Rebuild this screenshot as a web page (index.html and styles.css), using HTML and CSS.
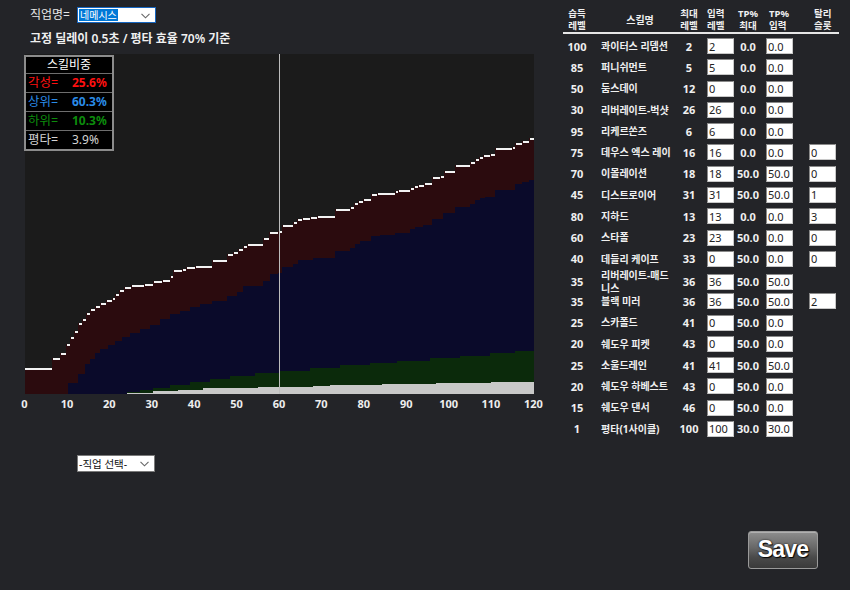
FILE: index.html
```html
<!DOCTYPE html>
<html lang="ko">
<head>
<meta charset="utf-8">
<title>스킬비중</title>
<link rel="stylesheet" href="styles.css">
</head>
<body>
<div class="app">
  <section class="left">
    <div class="jobrow">
      <span class="lbl">직업명=</span>
      <div class="fsel focus">
        <span class="hl">네메시스</span>
        <svg class="chev" width="9" height="6" viewBox="0 0 9 6"><path d="M0.5 0.8 L4.5 4.8 L8.5 0.8" fill="none" stroke="#666" stroke-width="1.1"/></svg>
      </div>
    </div>
    <div class="subtitle">고정 딜레이 0.5초 / 평타 효율 70% 기준</div>
    <div class="chart">
      <svg class="plot" width="509" height="340" viewBox="25 53 509 340" preserveAspectRatio="none">
        <path fill="#2b0b0e" d="M25 393V367H52V357H60V352H66V343H70V336H74V330H78V322H82V318H86V312H90V308H95V305H100V302H106V299H112V297H115V293H119V289H124V286H131V284H144V283H153V280H162V279H170V275H173V269H182V268H186V266H195V265H212V259H227V253H233V251H238V248H243V245H247V243H263V237H269V231H278V230H282V224H293V221H297V218H302V217H310V216H317V215H335V208H350V206H354V202H358V200H363V198H371V193H377V192H395V190H398V189H410V187H414V185H418V184H424V182H432V176H440V175H444V170H455V164H470V161H475V158H479V156H483V154H490V153H495V147H512V146H515V142H522V140H529V137H534V393Z"/>
        <path fill="#0a0a2a" d="M68 393V382H78V373H85V363H90V358H95V352H100V348H108V344H115V340H122V336H130V332H140V328H150V324H160V318H170V313H180V310H190V306H200V303H212V300H227V295H237V291H243V285H263V280H270V273H278V272H282V266H293V263H298V259H313V257H335V250H350V247H355V243H360V240H371V235H380V234H395V232H410V228H415V226H423V224H432V218H443V212H455V206H470V203H475V199H480V197H485V196H495V189H515V183H522V181H529V179H534V393Z"/>
        <path fill="#0b2a0b" d="M127 393V391H140V389H153V387H170V384H190V381H210V378H230V375H255V372H280V370H310V367H340V364H370V362H397V360H430V357H460V355H490V352H515V350H534V393Z"/>
        <path fill="#c8c8c8" d="M127 393V392H153V390H178V389H203V387H258V386H313V385H330V384H382V383H436V382H491V381H534V393Z"/>
        <path fill="none" stroke="#f2f2f2" stroke-width="2" d="M25 368H52M53 358H60M61 353H66M67 344H70M71 337H74M75 331H78M79 323H82M83 319H86M87 313H90M91 309H95M96 306H100M101 303H106M107 300H112M113 298H115M116 294H119M120 290H124M125 287H131M132 285H144M145 284H153M154 281H162M163 280H170M171 276H173M174 270H182M183 269H186M187 267H195M196 266H212M213 260H227M228 254H233M234 252H238M239 249H243M244 246H247M248 244H263M264 238H269M270 232H278M279 231H282M283 225H293M294 222H297M298 219H302M303 218H310M311 217H317M318 216H335M336 209H350M351 207H354M355 203H358M359 201H363M364 199H371M372 194H377M378 193H395M396 191H398M399 190H410M411 188H414M415 186H418M419 185H424M425 183H432M433 177H440M441 176H444M445 171H455M456 165H470M471 162H475M476 159H479M480 157H483M484 155H490M491 154H495M496 148H512M513 147H515M516 143H522M523 141H529M530 138H534"/>
        <path stroke="#bdbdbd" stroke-width="1" d="M279.5 53V393"/>
      </svg>
      <div class="legend">
        <div class="lg-title">스킬비중</div>
        <div class="lg-row c-awk"><span class="k">각성=</span><span class="v">25.6%</span></div>
        <div class="lg-row c-up"><span class="k">상위=</span><span class="v">60.3%</span></div>
        <div class="lg-row c-low"><span class="k">하위=</span><span class="v">10.3%</span></div>
        <div class="lg-row c-basic"><span class="k">평타=</span><span class="v">3.9%</span></div>
      </div>
    </div>
    <div class="axis">
      <span>0</span><span>10</span><span>20</span><span>30</span><span>40</span><span>50</span><span>60</span><span>70</span><span>80</span><span>90</span><span>100</span><span>110</span><span>120</span>
    </div>
    <div class="fsel sel2">
      <span class="opt">-직업 선택-</span>
      <svg class="chev" width="9" height="6" viewBox="0 0 9 6"><path d="M0.5 0.8 L4.5 4.8 L8.5 0.8" fill="none" stroke="#666" stroke-width="1.1"/></svg>
    </div>
  </section>

  <section class="right">
    <div class="row thead">
      <span class="c1">습득<br>레벨</span>
      <span class="c2 hc">스킬명</span>
      <span class="c3">최대<br>레벨</span>
      <span class="c4h">입력<br>레벨</span>
      <span class="c5">TP%<br>최대</span>
      <span class="c6h">TP%<br>입력</span>
      <span class="c7h">탈리<br>슬롯</span>
    </div>
    <div class="rows">
      <div class="row"><span class="c1">100</span><span class="c2">콰이터스 리뎀션</span><span class="c3">2</span><span class="c4"><input class="inp" value="2"></span><span class="c5">0.0</span><span class="c6"><input class="inp" value="0.0"></span><span class="c7"></span></div>
      <div class="row"><span class="c1">85</span><span class="c2">퍼니쉬먼트</span><span class="c3">5</span><span class="c4"><input class="inp" value="5"></span><span class="c5">0.0</span><span class="c6"><input class="inp" value="0.0"></span><span class="c7"></span></div>
      <div class="row"><span class="c1">50</span><span class="c2">둠스데이</span><span class="c3">12</span><span class="c4"><input class="inp" value="0"></span><span class="c5">0.0</span><span class="c6"><input class="inp" value="0.0"></span><span class="c7"></span></div>
      <div class="row"><span class="c1">30</span><span class="c2">리버레이트-벅샷</span><span class="c3">26</span><span class="c4"><input class="inp" value="26"></span><span class="c5">0.0</span><span class="c6"><input class="inp" value="0.0"></span><span class="c7"></span></div>
      <div class="row"><span class="c1">95</span><span class="c2">리케르쏜즈</span><span class="c3">6</span><span class="c4"><input class="inp" value="6"></span><span class="c5">0.0</span><span class="c6"><input class="inp" value="0.0"></span><span class="c7"></span></div>
      <div class="row"><span class="c1">75</span><span class="c2">데우스 엑스 레이</span><span class="c3">16</span><span class="c4"><input class="inp" value="16"></span><span class="c5">0.0</span><span class="c6"><input class="inp" value="0.0"></span><span class="c7"><input class="inp" value="0"></span></div>
      <div class="row"><span class="c1">70</span><span class="c2">이몰레이션</span><span class="c3">18</span><span class="c4"><input class="inp" value="18"></span><span class="c5">50.0</span><span class="c6"><input class="inp" value="50.0"></span><span class="c7"><input class="inp" value="0"></span></div>
      <div class="row"><span class="c1">45</span><span class="c2">디스트로이어</span><span class="c3">31</span><span class="c4"><input class="inp" value="31"></span><span class="c5">50.0</span><span class="c6"><input class="inp" value="50.0"></span><span class="c7"><input class="inp" value="1"></span></div>
      <div class="row"><span class="c1">80</span><span class="c2">지하드</span><span class="c3">13</span><span class="c4"><input class="inp" value="13"></span><span class="c5">0.0</span><span class="c6"><input class="inp" value="0.0"></span><span class="c7"><input class="inp" value="3"></span></div>
      <div class="row"><span class="c1">60</span><span class="c2">스타폴</span><span class="c3">23</span><span class="c4"><input class="inp" value="23"></span><span class="c5">50.0</span><span class="c6"><input class="inp" value="0.0"></span><span class="c7"><input class="inp" value="0"></span></div>
      <div class="row"><span class="c1">40</span><span class="c2">데들리 케이프</span><span class="c3">33</span><span class="c4"><input class="inp" value="0"></span><span class="c5">50.0</span><span class="c6"><input class="inp" value="0.0"></span><span class="c7"><input class="inp" value="0"></span></div>
      <div class="row"><span class="c1">35</span><span class="c2">리버레이트-매드니스</span><span class="c3">36</span><span class="c4"><input class="inp" value="36"></span><span class="c5">50.0</span><span class="c6"><input class="inp" value="50.0"></span><span class="c7"></span></div>
      <div class="row"><span class="c1">35</span><span class="c2">블랙 미러</span><span class="c3">36</span><span class="c4"><input class="inp" value="36"></span><span class="c5">50.0</span><span class="c6"><input class="inp" value="50.0"></span><span class="c7"><input class="inp" value="2"></span></div>
      <div class="row"><span class="c1">25</span><span class="c2">스카폴드</span><span class="c3">41</span><span class="c4"><input class="inp" value="0"></span><span class="c5">50.0</span><span class="c6"><input class="inp" value="0.0"></span><span class="c7"></span></div>
      <div class="row"><span class="c1">20</span><span class="c2">쉐도우 피켓</span><span class="c3">43</span><span class="c4"><input class="inp" value="0"></span><span class="c5">50.0</span><span class="c6"><input class="inp" value="0.0"></span><span class="c7"></span></div>
      <div class="row"><span class="c1">25</span><span class="c2">소울드레인</span><span class="c3">41</span><span class="c4"><input class="inp" value="41"></span><span class="c5">50.0</span><span class="c6"><input class="inp" value="50.0"></span><span class="c7"></span></div>
      <div class="row"><span class="c1">20</span><span class="c2">쉐도우 하베스트</span><span class="c3">43</span><span class="c4"><input class="inp" value="0"></span><span class="c5">50.0</span><span class="c6"><input class="inp" value="0.0"></span><span class="c7"></span></div>
      <div class="row"><span class="c1">15</span><span class="c2">쉐도우 댄서</span><span class="c3">46</span><span class="c4"><input class="inp" value="0"></span><span class="c5">50.0</span><span class="c6"><input class="inp" value="0.0"></span><span class="c7"></span></div>
      <div class="row"><span class="c1">1</span><span class="c2">평타(1사이클)</span><span class="c3">100</span><span class="c4"><input class="inp" value="100"></span><span class="c5">30.0</span><span class="c6"><input class="inp" value="30.0"></span><span class="c7"></span></div>
    </div>
    <button class="save">Save</button>
  </section>
</div>
</body>
</html>
```

FILE: styles.css
```css
html, body {
  margin: 0;
  padding: 0;
}
body {
  width: 850px;
  height: 590px;
  overflow: hidden;
  background: #232428;
  color: #f0f0f0;
  font-family: "Noto Sans", "Noto Sans CJK KR", sans-serif;
}
.app {
  display: flex;
  height: 590px;
}

/* ---------- left panel ---------- */
.left {
  flex: none;
  width: 538px;
  padding-left: 25px;
}
.jobrow {
  display: flex;
  align-items: center;
  height: 16px;
  margin-top: 7px;
  padding-left: 5px;
}
.lbl {
  width: 47px;
  font-size: 12px;
  line-height: 16px;
  color: #e8e8e8;
}
.fsel {
  position: relative;
  box-sizing: border-box;
  width: 79px;
  height: 16px;
  background: #fff;
  border: 1px solid #7a7a7a;
  display: flex;
  align-items: center;
}
.fsel.focus {
  border-color: #1666c0;
}
.hl {
  margin-left: 1px;
  padding: 0 1px;
  background: #0078d7;
  color: #fff;
  font-size: 10px;
  line-height: 12px;
}
.chev {
  position: absolute;
  right: 5px;
  top: 5px;
}
.subtitle {
  margin-top: 9px;
  padding-left: 5px;
  font-size: 12px;
  line-height: 14px;
  font-weight: 600;
  color: #f0f0f0;
}
.chart {
  position: relative;
  width: 509px;
  height: 340px;
  margin-top: 8px;
  background: #1b1b1b;
}
.plot {
  display: block;
}
.legend {
  position: absolute;
  left: -1px;
  top: 1px;
  width: 90px;
  box-sizing: border-box;
  background: #000;
  border: 2px solid #8c8c8c;
}
.lg-title {
  height: 16px;
  line-height: 16px;
  text-align: center;
  font-size: 12px;
  color: #fff;
}
.lg-row {
  display: flex;
  height: 18px;
  line-height: 18px;
  border-top: 1px solid #6e6e6e;
  padding-left: 2px;
  font-size: 12.5px;
}
.lg-row .k {
  width: 44px;
}
.lg-row .v {
  font-weight: bold;
  font-size: 12px;
}
.c-awk { color: #ff1010; }
.c-up { color: #2a8ce8; }
.c-low { color: #0c8c0c; }
.c-basic { color: #d4d4d4; }
.c-basic .v { font-weight: normal; }

.axis {
  display: flex;
  margin-top: 3px;
  margin-left: -21.7px;
}
.axis span {
  flex: 0 0 42.42px;
  text-align: center;
  font-size: 11px;
  line-height: 14px;
  font-weight: bold;
  color: #eeeeee;
}
.sel2 {
  margin-top: 44px;
  margin-left: 52px;
  width: 78px;
  height: 17px;
}
.opt {
  padding-left: 1px;
  font-size: 10.5px;
  line-height: 14px;
  color: #111;
}

/* ---------- right panel ---------- */
.right {
  flex: 1;
  padding-top: 8px;
}
.row {
  display: grid;
  grid-template-columns: 28px 88px 20px 37px 24px 39px 41px;
  align-items: center;
  width: 277px;
  height: 21.28px;
}
.thead {
  height: auto;
  font-size: 9.5px;
  line-height: 12px;
  font-weight: bold;
  text-align: center;
  padding-bottom: 0;
  border-bottom: 2px solid #e6e6e6;
  width: 276px;
}
.thead .c4h { padding-left: 8px; text-align: left; }
.thead .c6h { padding-left: 9px; text-align: left; }
.thead .c7h { padding-left: 15px; text-align: left; }
.rows {
  margin-top: 1.5px;
}
.c1 {
  text-align: center;
  font-size: 11px;
  font-weight: bold;
}
.c2 {
  padding-left: 10px;
  padding-right: 6px;
  font-size: 10px;
  line-height: 12.5px;
  font-weight: bold;
}
.c2.hc {
  text-align: center;
  line-height: 12px;
  padding-right: 0;
}
.thead .c1, .thead .c3, .thead .c5 {
  font-size: 9.5px;
}
.c3 {
  text-align: center;
  font-size: 11px;
  font-weight: bold;
}
.c5 {
  text-align: center;
  font-size: 11px;
  font-weight: bold;
  white-space: nowrap;
}
.c4, .c6, .c7 {
  display: flex;
}
.c4 { padding-left: 8px; }
.c6 { padding-left: 6px; }
.c7 { padding-left: 10px; }
.inp {
  box-sizing: border-box;
  width: 27px;
  height: 16px;
  margin: 0;
  padding: 0 1px;
  border: 1px solid #8a8a8a;
  border-right-color: #c8c8c8;
  border-bottom-color: #c8c8c8;
  background: #fff;
  color: #222;
  font-family: "Noto Sans", sans-serif;
  font-size: 11px;
  line-height: 14px;
}
.save {
  display: block;
  margin: 91px 0 0 185px;
  width: 70px;
  height: 38px;
  padding: 0;
  border: 1px solid #9a9a9a;
  border-radius: 3px;
  background: linear-gradient(#8e8e8e, #666 45%, #4a4a4a 70%, #3a3a3a);
  box-shadow: inset 0 1px 0 #b0b0b0;
  color: #fff;
  font-family: "Liberation Sans", sans-serif;
  font-weight: bold;
  font-size: 23px;
  letter-spacing: -0.8px;
  text-shadow: 0 0 2px #111, 1px 1px 1px #000;
}
```
